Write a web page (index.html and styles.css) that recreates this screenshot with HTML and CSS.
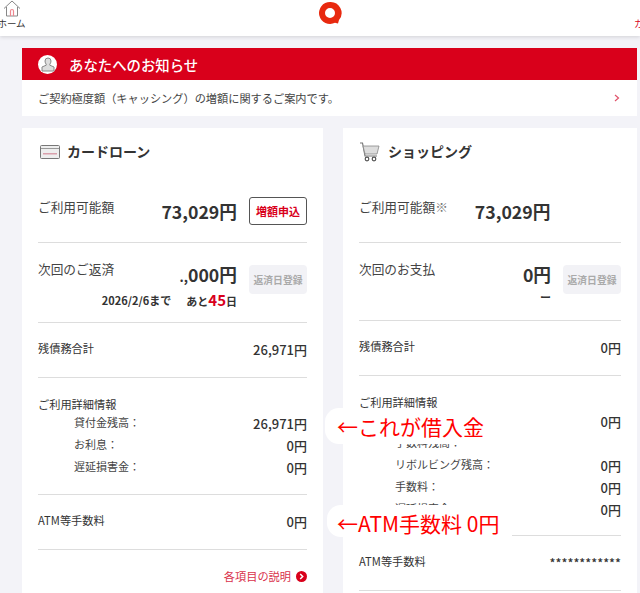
FILE: index.html
```html
<!DOCTYPE html>
<html lang="ja">
<head>
    <meta charset="UTF-8">
    <title>会員ページ</title>
    <link rel="stylesheet" href="styles.css">
</head>
<body>
    <header class="site-header">
        <a class="home-link">
            <svg class="home-icon" width="20" height="17" viewBox="0 0 20 17" fill="none">
                <path d="M2 8.500 10 1l8 7.500M4.500 7v9h11V7" stroke="#888" stroke-width="1"/>
                <path d="M8.500 16v-5a1.500 1.500 0 0 1 3 0v5" stroke="#ee8890" stroke-width="1.200"/>
            </svg>
            <span>ホーム</span>
        </a>
        <svg class="logo" width="24" height="24" viewBox="0 0 24 24">
            <path d="M12 1a11 11 0 1 0 5 20.800l3 .7 1-3.500A11 11 0 0 0 12 1zm0 6a5 5 0 1 1 0 10 5 5 0 0 1 0-10z" fill="#e8290f" fill-rule="evenodd"/>
        </svg>
        <a class="header-right">カード</a>
    </header>

    <main class="page">
        <section class="notice">
            <div class="notice-head">
                <span class="notice-avatar">
                    <svg width="14" height="16" viewBox="0 0 14 16" fill="#ddd" stroke="#888" stroke-width="1">
                        <path d="M4 5a3 3 0 0 1 6 0c0 1.500-.6 2.500-1.200 3.200v1L13 11v4H1v-4l4.200-1.800v-1C4.600 7.500 4 6.500 4 5z"/>
                    </svg>
                </span>
                <h2>あなたへのお知らせ</h2>
            </div>
            <div class="notice-body">
                <span>ご契約極度額（キャッシング）の増額に関するご案内です。</span>
                <svg width="6" height="8" viewBox="0 0 6 8" fill="none"><path d="M1 1l3.500 3L1 7" stroke="#e0526a" stroke-width="1.200"/></svg>
            </div>
        </section>

        <div class="cards">
            <section class="card card-loan">
                <div class="card-head">
                    <svg width="20" height="14" viewBox="0 0 20 14">
                        <rect x=".5" y=".5" width="19" height="13" rx="1" fill="#eee" stroke="#777"/>
                        <rect x="1" y="3" width="18" height="1" fill="#999"/>
                        <rect x="3" y="8" width="14" height="1.500" fill="#d9a0ac"/>
                    </svg>
                    <h3>カードローン</h3>
                </div>

                <div class="row row-limit">
                    <span class="label">ご利用可能額</span>
                    <strong class="amount-lg">73,029円</strong>
                    <button class="btn-outline">増額申込</button>
                </div>
                <div class="row row-next">
                    <span class="label">次回のご返済</span>
                    <div class="next-values">
                        <strong class="amount-lg"><span class="masked">.,</span>000円</strong>
                        <p class="due"><span>2026/2/6まで</span><span class="due-left">あと<em>45</em>日</span></p>
                    </div>
                    <button class="btn-disabled">返済日登録</button>
                </div>
                <div class="row row-total">
                    <span class="label-sm">残債務合計</span>
                    <strong class="amount">26,971円</strong>
                </div>
                <div class="row-detail">
                    <p class="label-sm detail-title">ご利用詳細情報</p>
                    <dl class="detail-list">
                        <div><dt>貸付金残高：</dt><dd>26,971円</dd></div>
                        <div><dt>お利息：</dt><dd>0円</dd></div>
                        <div><dt>遅延損害金：</dt><dd>0円</dd></div>
                    </dl>
                </div>
                <div class="row row-total">
                    <span class="label-sm">ATM等手数料</span>
                    <strong class="amount">0円</strong>
                </div>
                <a class="more-link">各項目の説明
                    <svg width="11" height="11" viewBox="0 0 11 11"><circle cx="5.500" cy="5.500" r="5.500" fill="#d9001b"/><path d="M4.200 3l2.500 2.500L4.200 8" fill="none" stroke="#fff" stroke-width="1.500"/></svg>
                </a>
            </section>

            <section class="card card-shop">
                <div class="card-head">
                    <svg width="21" height="20" viewBox="0 0 21 20" fill="none">
                        <path d="M1 1h2.500L6 14h12" stroke="#777" stroke-width="1.200"/>
                        <path d="M4 4h16l-2 8H6z" fill="#ddd" stroke="#888" stroke-width=".8"/>
                        <circle cx="8" cy="17" r="1.800" stroke="#555" stroke-width="1.200"/>
                        <circle cx="15" cy="17" r="1.800" stroke="#555" stroke-width="1.200"/>
                    </svg>
                    <h3>ショッピング</h3>
                </div>

                <div class="row row-limit">
                    <span class="label">ご利用可能額<small>※</small></span>
                    <strong class="amount-lg shop-limit">73,029円</strong>
                </div>
                <div class="row row-next row-next-shop">
                    <span class="label">次回のお支払</span>
                    <div class="next-values">
                        <strong class="amount-lg">0円</strong>
                        <p class="due">ー</p>
                    </div>
                    <button class="btn-disabled">返済日登録</button>
                </div>
                <div class="row row-total">
                    <span class="label-sm">残債務合計</span>
                    <strong class="amount">0円</strong>
                </div>
                <div class="row-detail row-detail-shop">
                    <p class="label-sm detail-title">ご利用詳細情報</p>
                    <dl class="detail-list">
                        <div><dt>キャッシング残高：</dt><dd>0円</dd></div>
                        <div><dt>手数料残高：</dt><dd></dd></div>
                        <div><dt>リボルビング残高：</dt><dd>0円</dd></div>
                        <div><dt>手数料：</dt><dd>0円</dd></div>
                        <div><dt>遅延損害金：</dt><dd>0円</dd></div>
                    </dl>
                </div>
                <div class="row row-total">
                    <span class="label-sm">ATM等手数料</span>
                    <strong class="amount masked-stars">************</strong>
                </div>
            </section>
        </div>
    </main>

    <div class="callout callout-loan">←これが借入金</div>
    <div class="callout callout-atm">←ATM手数料 0円</div>
</body>
</html>
```

FILE: styles.css
```css
* {
    box-sizing: border-box;
}

html, body {
    height: 593px;
    overflow: hidden;
}

body {
    margin: 0;
    position: relative;
    background: #f3f3f8;
    color: #333;
    font-family: "Noto Sans CJK JP", "Noto Sans", sans-serif;
}

p, h2, h3, dl, dd {
    margin: 0;
}

.site-header {
    height: 36px;
    background: #fff;
    box-shadow: 0 1px 4px rgba(0, 0, 0, 0.14);
    display: flex;
    justify-content: center;
    position: relative;
}

.home-link {
    position: absolute;
    left: -4px;
    top: 0;
    width: 31px;
    display: flex;
    flex-direction: column;
    align-items: center;
    font-size: 9.500px;
    line-height: 12px;
    color: #333;
}

.logo {
    margin: 1px 0 0 19px;
}

.header-right {
    position: absolute;
    left: 634px;
    top: 18px;
    font-size: 9px;
    line-height: 12px;
    white-space: nowrap;
    color: #d9001b;
}

.page {
    padding: 12px 3px 0 22px;
}

.notice-head {
    height: 32px;
    background: #d9001b;
    color: #fff;
    display: flex;
    align-items: center;
    padding-left: 16px;
    gap: 12px;
}

.notice-head h2 {
    font-size: 14.400px;
    font-weight: 500;
}

.notice-avatar {
    width: 19px;
    height: 19px;
    border-radius: 50%;
    background: #fff;
    display: flex;
    align-items: center;
    justify-content: center;
}

.notice-body {
    height: 36px;
    background: #fff;
    display: flex;
    align-items: center;
    justify-content: space-between;
    padding: 0 17px 0 16px;
    font-size: 11.200px;
    color: #444;
}

.cards {
    display: flex;
    gap: 20px;
    margin-top: 12px;
    align-items: flex-start;
}

.card {
    background: #fff;
    padding: 0 16px;
    height: 480px;
}

.card-loan {
    width: 301px;
}

.card-shop {
    width: 294px;
}

.card-head {
    height: 48px;
    display: flex;
    align-items: center;
    gap: 7px;
    padding-left: 2px;
}

.card-head h3 {
    font-size: 14px;
    font-weight: 700;
    color: #333;
    margin-bottom: 2px;
}

.card-shop .card-head {
    padding-left: 0;
    gap: 8px;
}

.row {
    display: flex;
    border-bottom: 1px solid #ddd;
}

.label {
    font-size: 12.700px;
    line-height: 18px;
    color: #444;
    white-space: nowrap;
    margin-top: -1px;
}

.label small {
    font-size: 12.700px;
    color: #777;
}

.label-sm {
    font-size: 11.200px;
    line-height: 16px;
    color: #333;
}

.amount-lg {
    font-size: 17.700px;
    line-height: 24px;
    font-weight: 700;
    color: #333;
    white-space: nowrap;
}

.amount {
    font-size: 13px;
    line-height: 18px;
    font-weight: 500;
    margin-left: auto;
}

.row-limit {
    height: 67px;
    padding-top: 23px;
}

.row-limit .amount-lg {
    margin-left: auto;
    margin-top: 0;
}

.row-limit .shop-limit {
    margin-left: 0;
    position: relative;
    left: 27px;
}

.btn-outline {
    flex-shrink: 0;
    width: 58px;
    height: 28px;
    margin: -2px 0 0 12px;
    border: 1px solid #555;
    border-radius: 3px;
    background: #fff;
    color: #d9001b;
    font: 700 11px "Noto Sans CJK JP", sans-serif;
    padding: 0;
}

.btn-disabled {
    flex-shrink: 0;
    width: 58px;
    height: 29px;
    margin: 4px 0 0 12px;
    border: 0;
    border-radius: 4px;
    background: #f2f2f6;
    color: #aaa;
    font: 700 9.800px "Noto Sans CJK JP", sans-serif;
    padding: 0;
}

.row-next {
    height: 80px;
    padding-top: 18px;
}

.row-next-shop {
    height: 78px;
}

.next-values {
    flex: 1;
    min-width: 0;
    text-align: right;
}

.next-values .amount-lg {
    display: block;
    margin-top: 1px;
}

.masked {
    font-size: 13px;
}

.due {
    font-size: 11px;
    line-height: 18px;
    font-weight: 700;
    color: #333;
    margin-top: 2px;
    display: flex;
    justify-content: flex-end;
    gap: 15px;
    white-space: nowrap;
}

.due em {
    font-style: normal;
    font-size: 15px;
    color: #d9001b;
}

.row-total {
    height: 55px;
    padding-top: 17px;
}

.card-shop .row-total:first-of-type {
    height: 56px;
}

.row-total .amount {
    margin-top: 1px;
}

.row-detail {
    height: 117px;
    padding-top: 18px;
    border-bottom: 1px solid #ddd;
}

.row-detail-shop {
    height: 160px;
}

.detail-title {
    line-height: 16px;
}

.detail-list {
    margin-top: 1px;
}

.detail-list div {
    display: flex;
    justify-content: space-between;
    height: 22px;
    padding-left: 36px;
}

.detail-list dt {
    font-size: 11px;
    line-height: 18px;
    color: #444;
}

.detail-list dd {
    font-size: 13px;
    line-height: 22px;
    font-weight: 500;
}

.amount.masked-stars {
    font-size: 12.300px;
}

.more-link {
    display: flex;
    justify-content: flex-end;
    align-items: center;
    gap: 5px;
    margin-top: 18px;
    font-size: 11.200px;
    line-height: 16px;
    color: #d9324b;
}

.callout {
    position: absolute;
    background: #fff;
    color: #f00;
    font-size: 21px;
    line-height: 28px;
    white-space: nowrap;
    border-radius: 14px;
}

.callout-loan {
    left: 325px;
    top: 408px;
    width: 166px;
    height: 36px;
    padding: 4px 0 0 12px;
}

.callout-atm {
    left: 327px;
    top: 505px;
    width: 185px;
    height: 32px;
    padding: 4px 0 0 10px;
    border-radius: 14px 0 0 14px;
}
```
